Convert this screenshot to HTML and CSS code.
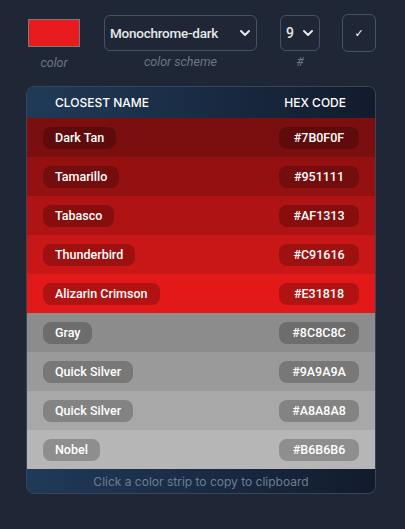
FILE: index.html
```html
<!DOCTYPE html>
<html>
<head>
<meta charset="utf-8">
<link rel="stylesheet" href="styles.css">
</head>
<body>
<div class="page">
  <div class="controls">
    <div class="ctl ctl-color">
      <div class="swatch"></div>
      <span class="label">color</span>
    </div>
    <div class="ctl ctl-scheme">
      <div class="select">
        <span>Monochrome-dark</span>
        <svg class="chev" width="12" height="8" viewBox="0 0 12 8"><path d="M2 2 L6 6 L10 2" fill="none" stroke="#e5e7eb" stroke-width="2" stroke-linecap="round" stroke-linejoin="round"/></svg>
      </div>
      <span class="label">color scheme</span>
    </div>
    <div class="ctl ctl-num">
      <div class="select small">
        <span>9</span>
        <svg class="chev" width="12" height="8" viewBox="0 0 12 8"><path d="M2 2 L6 6 L10 2" fill="none" stroke="#e5e7eb" stroke-width="2" stroke-linecap="round" stroke-linejoin="round"/></svg>
      </div>
      <span class="label">#</span>
    </div>
    <div class="ctl ctl-btn">
      <div class="btn">✓</div>
    </div>
  </div>

  <div class="table">
    <div class="thead">
      <span>CLOSEST NAME</span>
      <span class="hexhead">HEX CODE</span>
    </div>
    <div class="row" style="background:#7B0F0F"><span class="pill">Dark Tan</span><span class="pill hex">#7B0F0F</span></div>
    <div class="row" style="background:#951111"><span class="pill">Tamarillo</span><span class="pill hex">#951111</span></div>
    <div class="row" style="background:#AF1313"><span class="pill">Tabasco</span><span class="pill hex">#AF1313</span></div>
    <div class="row" style="background:#C91616"><span class="pill">Thunderbird</span><span class="pill hex">#C91616</span></div>
    <div class="row" style="background:#E31818"><span class="pill">Alizarin Crimson</span><span class="pill hex">#E31818</span></div>
    <div class="row" style="background:#8C8C8C"><span class="pill">Gray</span><span class="pill hex">#8C8C8C</span></div>
    <div class="row" style="background:#9A9A9A"><span class="pill">Quick Silver</span><span class="pill hex">#9A9A9A</span></div>
    <div class="row" style="background:#A8A8A8"><span class="pill">Quick Silver</span><span class="pill hex">#A8A8A8</span></div>
    <div class="row" style="background:#B6B6B6"><span class="pill">Nobel</span><span class="pill hex">#B6B6B6</span></div>
    <div class="tfoot">Click a color strip to copy to clipboard</div>
  </div>
</div>
</body>
</html>
```

FILE: styles.css
```css
* { box-sizing: border-box; }
html, body {
  margin: 0;
  padding: 0;
  background: #1f2736;
  font-family: Roboto, "Noto Sans", sans-serif;
  color: #f3f4f6;
}
.page {
  width: 405px;
  height: 529px;
  padding: 14px 0 0 26px;
}
.controls {
  display: flex;
  align-items: flex-start;
  padding-left: 2px;
}
.ctl {
  display: flex;
  flex-direction: column;
  align-items: center;
}
.ctl-color { width: 52px; margin-right: 24px; }
.ctl-scheme { width: 153px; margin-right: 23px; }
.ctl-num { width: 40px; margin-right: 22px; }
.ctl-btn { width: 34px; }
.swatch {
  width: 52px;
  height: 28px;
  margin-top: 5px;
  margin-bottom: 5px;
  background: #E81C1E;
  border: 1px solid #7a7a7a;
}
.select {
  width: 100%;
  height: 36px;
  margin-top: 1px;
  border: 1px solid #465263;
  border-radius: 6px;
  display: flex;
  align-items: center;
  justify-content: space-between;
  padding: 0 5px 0 5px;
  font-size: 13.5px;
  letter-spacing: -0.25px;
  font-weight: 500;
  color: #e5e7eb;
}
.select.small { padding: 0 5px 0 5px; font-size: 14px; letter-spacing: 0; }
.chev { display: block; }
.label {
  margin-top: 3px;
  font-size: 12.5px;
  font-style: italic;
  color: #6b7585;
  line-height: 16px;
}
.btn {
  width: 34px;
  height: 38px;
  border: 1px solid #465263;
  border-radius: 6px;
  display: flex;
  align-items: center;
  justify-content: center;
  font-family: "DejaVu Sans", sans-serif;
  font-size: 11px;
  color: #ffffff;
}
.table {
  margin-top: 15px;
  width: 350px;
  border: 1px solid #37455a;
  border-radius: 8px;
  overflow: hidden;
}
.thead {
  height: 31px;
  display: flex;
  align-items: center;
  justify-content: space-between;
  padding: 0 29px 0 28px;
  background: linear-gradient(90deg, #1f3a58 0%, #1a2b44 50%, #121b2c 100%);
  font-family: Inter, sans-serif;
  font-size: 12px;
  font-weight: 500;
  color: #ffffff;
}
.row {
  height: 39px;
  display: flex;
  align-items: center;
  justify-content: space-between;
  padding: 0 16px;
}
.pill {
  height: 22px;
  border-radius: 8px;
  background: rgba(0, 0, 0, 0.22);
  padding: 0 12px;
  display: flex;
  align-items: center;
  font-size: 12.5px;
  font-weight: 500;
  color: #ffffff;
}
.pill.hex {
  width: 80px;
  justify-content: center;
  padding: 0;
}
.tfoot {
  height: 24px;
  display: flex;
  align-items: center;
  justify-content: center;
  background: linear-gradient(90deg, #1f3a58 0%, #1a2b44 50%, #121b2c 100%);
  font-family: Inter, sans-serif;
  font-size: 12px;
  color: #6e7d92;
}
```
